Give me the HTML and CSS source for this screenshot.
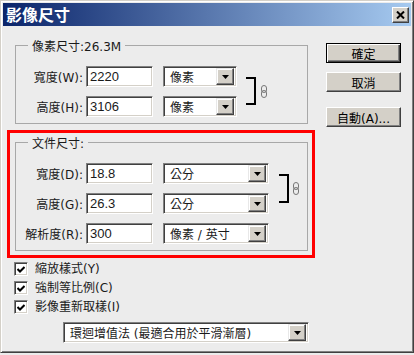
FILE: index.html
```html
<!DOCTYPE html>
<html>
<head>
    <title>影像尺寸</title>
    <link rel="stylesheet" href="styles.css">
</head>
<body>

<div class="window">
    <div class="titlebar">
        <span class="title">影像尺寸</span>
        <button class="close" type="button">
            <svg width="9" height="8" viewBox="0 0 9 8"><path d="M1 0.5 L8 7.5 M8 0.5 L1 7.5" stroke="#000" stroke-width="2"/></svg>
        </button>
    </div>

    <div class="content">
        <div class="left">
            <fieldset class="group g1">
                <legend>像素尺寸:26.3M</legend>
                <div class="group-body">
                    <div class="rows">
                        <div class="row">
                            <label>寬度(W):</label>
                            <div class="input">2220</div>
                            <div class="select short"><span>像素</span><i class="drop"><svg width="7" height="4" viewBox="0 0 7 4"><path d="M0 0 H7 L3.5 4 Z"/></svg></i></div>
                        </div>
                        <div class="row">
                            <label>高度(H):</label>
                            <div class="input">3106</div>
                            <div class="select short"><span>像素</span><i class="drop"><svg width="7" height="4" viewBox="0 0 7 4"><path d="M0 0 H7 L3.5 4 Z"/></svg></i></div>
                        </div>
                    </div>
                    <div class="bracket b1"></div>
                    <svg class="link l1" width="6" height="13" viewBox="0 0 6 13">
                        <rect x="0.5" y="0.5" width="5" height="7" rx="2.5" fill="none" stroke="#777"/>
                        <rect x="0.5" y="5.5" width="5" height="7" rx="2.5" fill="none" stroke="#777"/>
                    </svg>
                </div>
            </fieldset>

            <div class="highlight">
                <fieldset class="group g2">
                    <legend>文件尺寸:</legend>
                    <div class="group-body">
                        <div class="rows">
                            <div class="row">
                                <label>寬度(D):</label>
                                <div class="input">18.8</div>
                                <div class="select long"><span>公分</span><i class="drop"><svg width="7" height="4" viewBox="0 0 7 4"><path d="M0 0 H7 L3.5 4 Z"/></svg></i></div>
                            </div>
                            <div class="row">
                                <label>高度(G):</label>
                                <div class="input">26.3</div>
                                <div class="select long"><span>公分</span><i class="drop"><svg width="7" height="4" viewBox="0 0 7 4"><path d="M0 0 H7 L3.5 4 Z"/></svg></i></div>
                            </div>
                            <div class="row">
                                <label>解析度(R):</label>
                                <div class="input">300</div>
                                <div class="select long"><span>像素 / 英寸</span><i class="drop"><svg width="7" height="4" viewBox="0 0 7 4"><path d="M0 0 H7 L3.5 4 Z"/></svg></i></div>
                            </div>
                        </div>
                        <div class="bracket b2"></div>
                        <svg class="link l2" width="6" height="13" viewBox="0 0 6 13">
                            <rect x="0.5" y="0.5" width="5" height="7" rx="2.5" fill="none" stroke="#777"/>
                            <rect x="0.5" y="5.5" width="5" height="7" rx="2.5" fill="none" stroke="#777"/>
                        </svg>
                    </div>
                </fieldset>
            </div>

            <div class="checks">
                <div class="check"><i class="box"><svg width="8" height="7" viewBox="0 0 8 7"><path d="M0.5 3 L3 5.5 L7.5 1" fill="none" stroke="#000" stroke-width="2"/></svg></i><span>縮放樣式(Y)</span></div>
                <div class="check"><i class="box"><svg width="8" height="7" viewBox="0 0 8 7"><path d="M0.5 3 L3 5.5 L7.5 1" fill="none" stroke="#000" stroke-width="2"/></svg></i><span>強制等比例(C)</span></div>
                <div class="check"><i class="box"><svg width="8" height="7" viewBox="0 0 8 7"><path d="M0.5 3 L3 5.5 L7.5 1" fill="none" stroke="#000" stroke-width="2"/></svg></i><span>影像重新取樣(I)</span></div>
            </div>

            <div class="select method"><span>環迴增值法 (最適合用於平滑漸層)</span><i class="drop"><svg width="7" height="4" viewBox="0 0 7 4"><path d="M0 0 H7 L3.5 4 Z"/></svg></i></div>
        </div>

        <div class="buttons">
            <button type="button" class="btn default">確定</button>
            <button type="button" class="btn cancel">取消</button>
            <button type="button" class="btn auto">自動(A)...</button>
        </div>
    </div>
</div>

</body>
</html>
```

FILE: styles.css
```css
body {
    margin: 0;
    background-color: #ececec;
    font-family: "DejaVu Sans", "Noto Sans CJK TC", sans-serif;
    font-size: 12px;
    color: #1a1a1a;
}
.window {
    width: 414px;
    height: 353px;
    box-sizing: border-box;
    border: 1px solid;
    border-color: #d4d0c8 #404040 #404040 #d4d0c8;
    box-shadow: inset 1px 1px #fff, inset -1px -1px #808080;
    padding: 2px;
    background-color: #ececec;
}
.titlebar {
    height: 23px;
    display: flex;
    justify-content: space-between;
    align-items: flex-start;
    background: linear-gradient(to right, #0a246a, #a6caf0);
}
.title {
    color: #fff;
    font-family: "Noto Sans CJK TC", sans-serif;
    font-weight: bold;
    font-size: 16px;
    line-height: 23px;
    padding-left: 3px;
}
.close {
    width: 17px;
    height: 16px;
    margin: 4px 2px 0 0;
    padding: 0;
    box-sizing: border-box;
    background-color: #d4d0c8;
    border: 1px solid;
    border-color: #fff #404040 #404040 #fff;
    box-shadow: inset -1px -1px #808080;
    display: flex;
    align-items: center;
    justify-content: center;
}
.content {
    display: flex;
    align-items: flex-start;
}
.left {
    width: 308px;
    margin: 10px 0 0 4px;
}
.group {
    margin: 0;
    padding: 0;
    min-width: 0;
    border: 1px solid #a8a8a8;
}
.group legend {
    margin-left: 12px;
    padding: 4px 4px 0;
    line-height: 14px;
}
.g1 {
    margin: 0 7px 0 8px;
}
.group-body {
    display: flex;
    align-items: flex-start;
    margin-top: 12px;
    padding-bottom: 6px;
}
.rows {
    display: flex;
    flex-direction: column;
    gap: 9px;
}
.row {
    display: flex;
    align-items: center;
    height: 21px;
}
.row label {
    width: 70px;
    box-sizing: border-box;
    padding-right: 3px;
    text-align: right;
}
.input {
    width: 67px;
    height: 21px;
    box-sizing: border-box;
    margin-right: 10px;
    padding: 0 2px;
    background-color: #fff;
    border: 1px solid;
    border-color: #808080 #fff #fff #808080;
    box-shadow: inset 1px 1px #404040, inset -1px -1px #d4d0c8;
    font-family: "Liberation Sans", sans-serif;
    font-size: 13px;
    line-height: 19px;
    padding-left: 3px;
}
.select {
    height: 21px;
    box-sizing: border-box;
    display: flex;
    align-items: center;
    justify-content: space-between;
    background-color: #fff;
    border: 1px solid;
    border-color: #808080 #fff #fff #808080;
    box-shadow: inset 1px 1px #404040, inset -1px -1px #d4d0c8;
    padding: 2px 2px 2px 6px;
}
.select.short {
    width: 74px;
}
.select.long {
    width: 106px;
}
.drop {
    width: 18px;
    height: 17px;
    box-sizing: border-box;
    background-color: #d4d0c8;
    border: 1px solid;
    border-color: #e8e8e8 #404040 #404040 #e8e8e8;
    box-shadow: inset -1px -1px #808080, inset 1px 1px #fff;
    display: flex;
    align-items: center;
    justify-content: center;
}
.bracket {
    width: 10px;
    box-sizing: border-box;
    border: 2px solid #000;
    border-left: none;
}
.b1 {
    height: 28px;
    margin: 11px 0 0 9px;
}
.l1 {
    margin: 19px 0 0 5px;
}
.b2 {
    height: 29px;
    margin: 11px 0 0 10px;
}
.l2 {
    margin: 19px 0 0 4px;
}
.highlight {
    margin-top: 6px;
    border: 3px solid #ff0000;
}
.g2 {
    margin: 0 4px 4px 5px;
}
.checks {
    margin: 4px 0 0 7px;
}
.check {
    display: flex;
    align-items: flex-start;
    height: 19px;
}
.box {
    width: 14px;
    height: 14px;
    box-sizing: border-box;
    background-color: #fff;
    border: 1px solid;
    border-color: #808080 #fff #fff #808080;
    box-shadow: inset 1px 1px #404040, inset -1px -1px #d4d0c8;
    display: flex;
    align-items: center;
    justify-content: center;
}
.check span {
    margin-left: 7px;
    line-height: 14px;
}
.select.method {
    width: 246px;
    margin: 3px 0 0 56px;
}
.buttons {
    display: flex;
    flex-direction: column;
    margin: 17px 0 0 11px;
}
.btn {
    width: 75px;
    height: 20px;
    padding: 0;
    box-sizing: border-box;
    font-family: "DejaVu Sans", "Noto Sans CJK TC", sans-serif;
    font-size: 12px;
    color: #000;
    background-color: #d4d0c8;
    border: 1px solid;
    border-color: #fff #404040 #404040 #fff;
    box-shadow: inset -1px -1px #808080;
}
.btn.default {
    border: 1px solid #000;
    box-shadow: inset 1px 1px #fff, inset -1px -1px #404040, inset -2px -2px #808080;
}
.btn.cancel {
    margin-top: 9px;
}
.btn.auto {
    margin-top: 15px;
}
```
